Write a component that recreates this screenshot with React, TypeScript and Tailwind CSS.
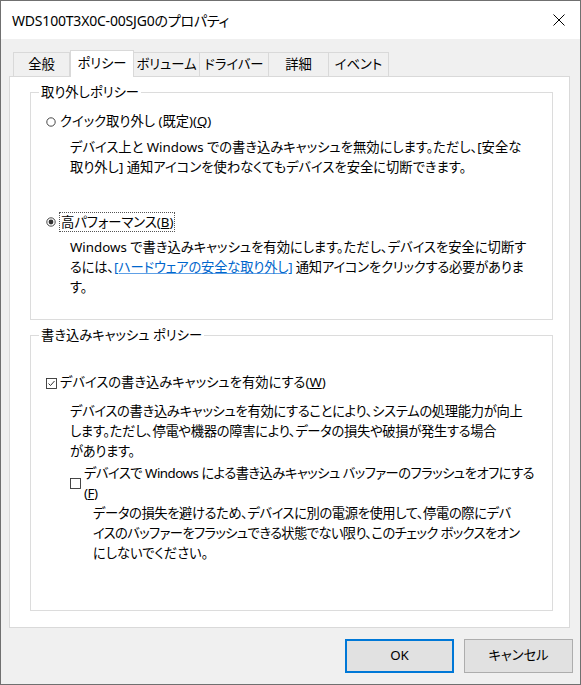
import React from "react";

const font = "[font-family:'Noto_Sans','Noto_Sans_CJK_JP',sans-serif] [font-feature-settings:'palt']";

function Radio({ checked }: { checked?: boolean }) {
  return (
    <svg width="10" height="10" viewBox="0 0 10 10" className="shrink-0">
      <circle cx="5" cy="5" r="4.2" fill="white" stroke="#333" strokeWidth="0.9" />
      {checked && <circle cx="5" cy="5" r="2.4" fill="#333" />}
    </svg>
  );
}

function Check({ checked }: { checked?: boolean }) {
  return (
    <svg width="11" height="11" viewBox="0 0 11 11" className="shrink-0">
      <rect x="0.5" y="0.5" width="10" height="10" fill="white" stroke="#333" strokeWidth="0.9" />
      {checked && <path d="M2.5 5.5 L4.5 7.5 L8.5 3" fill="none" stroke="#333" strokeWidth="1" />}
    </svg>
  );
}

const tabs = [
  { label: "全般", w: "w-[57px]" },
  { label: "ポリシー", w: "w-[64px]", active: true },
  { label: "ボリューム", w: "w-[66px]" },
  { label: "ドライバー", w: "w-[69px]" },
  { label: "詳細", w: "w-[60px]" },
  { label: "イベント", w: "w-[60px]" },
];

export default function App() {
  return (
    <div className={`w-[581px] h-[685px] border border-[#707070] bg-[#f0f0f0] flex flex-col text-black text-[13.3px] ${font}`}>
      {/* title bar */}
      <div className="h-[38px] bg-white flex items-center justify-between pl-[11px] pr-[15px] shrink-0">
        <span className="text-[14px] tracking-[-0.2px]">WDS100T3X0C-00SJG0のプロパティ</span>
        <svg width="12" height="12" viewBox="0 0 12 12">
          <path d="M0.5 0.5 L11.5 11.5 M11.5 0.5 L0.5 11.5" stroke="#000" strokeWidth="1" />
        </svg>
      </div>

      {/* tabs */}
      <div className="flex items-end pl-[12px] mt-[11px] h-[27px] relative z-10">
        {tabs.map((t) =>
          t.active ? (
            <div key={t.label} className={`${t.w} h-[27px] bg-white border border-b-0 border-[#d9d9d9] flex items-center justify-center pb-[1px]`}>
              {t.label}
            </div>
          ) : (
            <div key={t.label} className={`${t.w} h-[25px] border border-b-0 border-l-0 first:border-l border-[#d9d9d9] flex items-center justify-center`}>
              {t.label}
            </div>
          )
        )}
      </div>

      {/* panel */}
      <div className="ml-[8px] w-[561px] h-[552px] -mt-[1px] bg-white border border-[#d9d9d9] pl-[20px] pt-[5px] shrink-0">
        <fieldset className="w-[523px] h-[238px] border border-[#dcdcdc]">
          <legend className="ml-[8px] px-[2px] leading-[20px]">取り外しポリシー</legend>
          <div className="pl-[15px] pt-[10px]">
            <div className="flex items-center gap-[4px] h-[20px]">
              <Radio />
              <span>クイック取り外し (既定)(<span className="underline">Q</span>)</span>
            </div>
            <p className="pl-[24px] mt-[5px] leading-[20px] whitespace-nowrap">
              デバイス上と Windows での書き込みキャッシュを無効にします。ただし、[安全な
              <br />
              取り外し] 通知アイコンを使わなくてもデバイスを安全に切断できます。
            </p>
            <div className="flex items-center gap-[3px] h-[20px] mt-[35px]">
              <Radio checked />
              <span className="border border-dotted border-[#555] px-[1px] leading-[18px]">
                高パフォーマンス(<span className="underline">B</span>)
              </span>
            </div>
            <p className="pl-[24px] mt-[5px] leading-[20px] whitespace-nowrap">
              Windows で書き込みキャッシュを有効にします。ただし、デバイスを安全に切断す
              <br />
              <span className="tracking-[-0.2px]">
                るには、<span className="text-[#0066cc] underline decoration-[#5fa0e6]">[ハードウェアの安全な取り外し]</span> 通知アイコンをクリックする必要がありま
              </span>
              <br />
              す。
            </p>
          </div>
        </fieldset>

        <fieldset className="w-[523px] h-[286px] border border-[#dcdcdc] mt-[5px]">
          <legend className="ml-[8px] px-[2px] leading-[20px]">書き込みキャッシュ ポリシー</legend>
          <div className="pl-[15px] pt-[28px]">
            <div className="flex items-center gap-[3px] h-[20px]">
              <Check checked />
              <span>デバイスの書き込みキャッシュを有効にする(<span className="underline">W</span>)</span>
            </div>
            <p className="pl-[24px] mt-[8px] leading-[20px] whitespace-nowrap tracking-[-0.3px]">
              デバイスの書き込みキャッシュを有効にすることにより、システムの処理能力が向上
              <br />
              します。ただし、停電や機器の障害により、データの損失や破損が発生する場合
              <br />
              があります。
            </p>
            <div className="flex items-center gap-[3px] pl-[24px] mt-[2px]">
              <Check />
              <span className="leading-[20px] whitespace-nowrap tracking-[-0.5px]">
                デバイスで Windows による書き込みキャッシュ バッファーのフラッシュをオフにする
                <br />
                (<span className="underline">F</span>)
              </span>
            </div>
            <p className="pl-[47px] leading-[20px] whitespace-nowrap">
              <span className="tracking-[-0.4px]">データの損失を避けるため、デバイスに別の電源を使用して、停電の際にデバ</span>
              <br />
              <span className="tracking-[-0.6px]">イスのバッファーをフラッシュできる状態でない限り、このチェック ボックスをオン</span>
              <br />
              にしないでください。
            </p>
          </div>
        </fieldset>
      </div>

      {/* buttons */}
      <div className="flex justify-end gap-[10px] pr-[7px] mt-[11px]">
        <button className="w-[109px] h-[34px] bg-[#e1e1e1] border-2 border-[#0078d7]">OK</button>
        <button className="w-[109px] h-[34px] bg-[#e1e1e1] border border-[#adadad]">キャンセル</button>
      </div>
    </div>
  );
}
